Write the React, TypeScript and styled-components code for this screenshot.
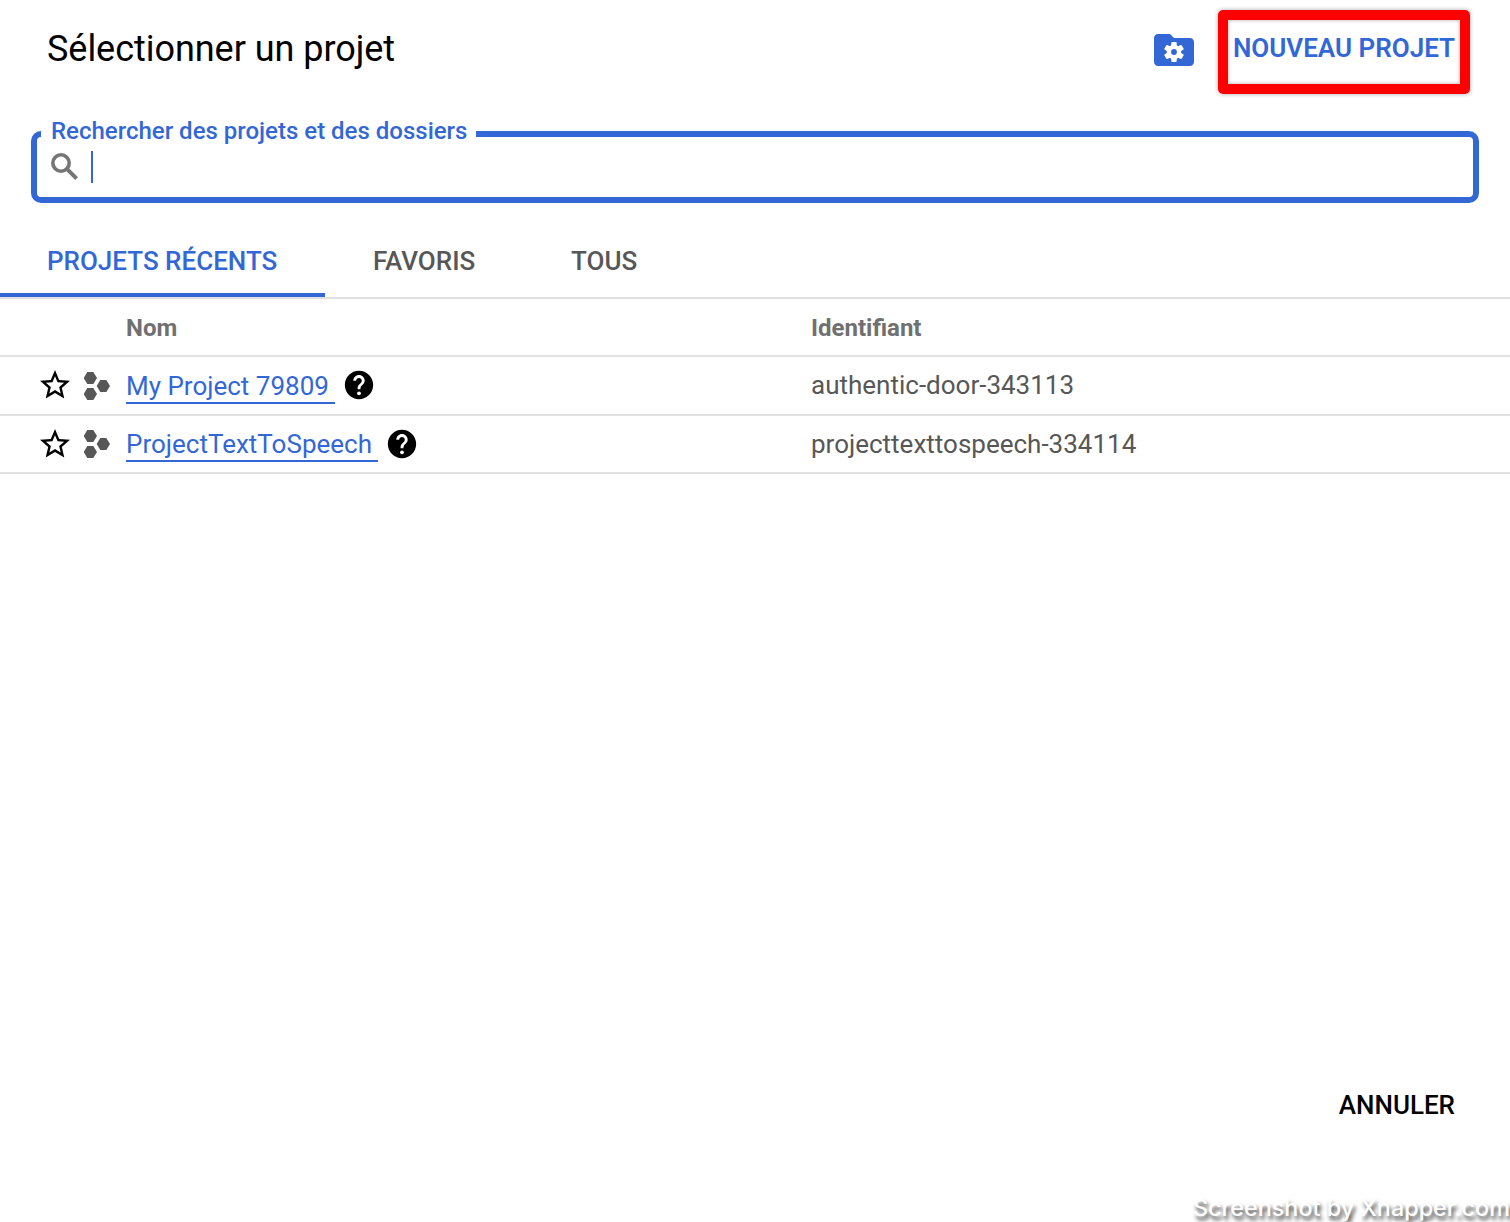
import React from "react";
import styled, { createGlobalStyle } from "styled-components";

const BLUE = "#3367d6";
const LINE = "#e0e0e0";

const GlobalStyle = createGlobalStyle`
  *, *::before, *::after { box-sizing: border-box; }
  body { margin: 0; background: #fff; font-family: Roboto, "Liberation Sans", sans-serif; }
  button { border: 0; background: none; padding: 0; font: inherit; }
`;

const Dialog = styled.main`
  position: relative;
  display: flex;
  flex-direction: column;
  width: 1510px;
  height: 1222px;
  overflow: hidden;
  background: #fff;
`;

const Header = styled.header`
  display: flex;
  align-items: flex-start;
  height: 120px;
  padding: 10px 40px 0 47px;
`;

const Title = styled.h1`
  flex: 1;
  margin: 18px 0 0;
  font-size: 36px;
  line-height: 42px;
  font-weight: 400;
  letter-spacing: -0.04px;
  color: #000;
`;

const FolderIcon = styled.svg`
  width: 48px;
  height: 48px;
  margin: 16px 20px 0 0;
  fill: ${BLUE};
`;

const NewProject = styled.button`
  width: 252px;
  height: 84px;
  padding-bottom: 8px;
  border: 10px solid #ff0000;
  border-radius: 5px;
  box-shadow: 0 0 4px rgba(0, 0, 0, 0.35), inset 0 0 4px rgba(0, 0, 0, 0.3);
  color: ${BLUE};
  font-size: 26px;
  line-height: 32px;
  font-weight: 600;
  white-space: nowrap;
`;

const SearchField = styled.fieldset`
  height: 83px;
  min-width: 0;
  margin: 0 31px;
  padding: 0 4px;
  border: 6px solid ${BLUE};
  border-radius: 10px;
`;

const SearchLabel = styled.legend`
  height: 28px;
  padding: 0 9px 6px 10px;
  color: ${BLUE};
  font-size: 24px;
  line-height: 22px;
  font-weight: 500;
  white-space: nowrap;
`;

const SearchRow = styled.div`
  display: flex;
  align-items: flex-start;
  padding-left: 10px;
`;

const SearchIcon = styled.svg`
  width: 28px;
  height: 28px;
  margin-top: 5px;
  fill: none;
  stroke: #757575;
`;

const Caret = styled.span`
  width: 2px;
  height: 32px;
  margin: 3px 0 0 12px;
  background: ${BLUE};
`;

const Tabs = styled.nav`
  display: flex;
  gap: 1px;
  height: 96px;
  padding-top: 28px;
  border-bottom: 2px solid ${LINE};
`;

const Tab = styled.button<{ $active?: boolean; $width: number }>`
  width: ${(p) => p.$width}px;
  padding: 0 0 2px 47px;
  border-bottom: 4px solid ${(p) => (p.$active ? BLUE : "transparent")};
  color: ${(p) => (p.$active ? BLUE : "#575757")};
  font-size: 26px;
  line-height: 32px;
  font-weight: 500;
  text-align: left;
  white-space: nowrap;
`;

const Row = styled.div<{ $first?: boolean }>`
  display: grid;
  grid-template-columns: 126px 685px 1fr;
  align-items: center;
  height: ${(p) => (p.$first ? 59 : 58)}px;
  padding-bottom: ${(p) => (p.$first ? 1 : 0)}px;
  border-bottom: 2px solid ${LINE};
  color: #575757;
  font-size: 26px;
  line-height: 32px;
`;

const HeadCell = styled.span`
  padding-top: 2px;
  color: #707070;
  font-size: 24px;
  font-weight: 700;
`;

const RowIcons = styled.span`
  display: flex;
  align-items: center;
  padding-left: 37px;
`;

const StarIcon = styled.svg`
  width: 36px;
  height: 36px;
  fill: #000;
`;

const HexIcon = styled.svg<{ $first?: boolean }>`
  width: 28px;
  height: 28px;
  margin: ${(p) => (p.$first ? 2 : 0)}px 0 0 10px;
  fill: #575757;
`;

const NameCell = styled.span`
  display: flex;
  align-items: center;
`;

const ProjectLink = styled.a<{ $width: number; $first?: boolean }>`
  width: ${(p) => p.$width}px;
  height: 34px;
  margin-top: ${(p) => (p.$first ? 4 : 2)}px;
  border-bottom: 2px solid ${BLUE};
  color: ${BLUE};
  white-space: nowrap;
`;

const HelpIcon = styled.svg`
  width: 34px;
  height: 34px;
  margin-left: 7px;
  fill: #000;
`;

const IdCell = styled.span`
  white-space: nowrap;
`;

const Footer = styled.footer`
  display: flex;
  justify-content: flex-end;
  margin-top: auto;
  padding: 0 55px 101px 0;
`;

const Cancel = styled.button`
  color: #000;
  font-size: 26px;
  line-height: 32px;
  font-weight: 500;
`;

const Watermark = styled.div`
  position: absolute;
  left: 1193px;
  bottom: 0;
  color: #fff;
  font-family: Inter, "Liberation Sans", sans-serif;
  font-size: 23.4px;
  line-height: 28px;
  font-weight: 500;
  white-space: nowrap;
  text-shadow: 2px 4px 4px rgba(0, 0, 0, 0.8);
`;

const projects = [
  { name: "My Project 79809", id: "authentic-door-343113", width: 209 },
  { name: "ProjectTextToSpeech", id: "projecttexttospeech-334114", width: 252 },
];

export default function App() {
  return (
    <>
      <GlobalStyle />
      <Dialog>
        <Header>
          <Title>Sélectionner un projet</Title>
          <FolderIcon viewBox="0 0 48 48">
            <path d="M40 12H24l-4-4H8c-2.2 0-4 1.8-4 4v24c0 2.2 1.8 4 4 4h32c2.2 0 4-1.8 4-4V16c0-2.2-1.8-4-4-4z" />
            <g fill="#fff" transform="translate(24 26)">
              <circle r="7.3" />
              <rect x="-2.7" y="-10" width="5.4" height="20" rx="0.9" />
              <rect x="-2.7" y="-10" width="5.4" height="20" rx="0.9" transform="rotate(60)" />
              <rect x="-2.7" y="-10" width="5.4" height="20" rx="0.9" transform="rotate(120)" />
            </g>
            <circle cx="24" cy="26" r="2.9" />
          </FolderIcon>
          <NewProject>NOUVEAU PROJET</NewProject>
        </Header>
        <SearchField>
          <SearchLabel>Rechercher des projets et des dossiers</SearchLabel>
          <SearchRow>
            <SearchIcon viewBox="0 0 28 28">
              <circle cx="10" cy="10" r="8.2" strokeWidth="3.6" />
              <path d="M15.6 15.6L25.6 25.6" strokeWidth="4" />
            </SearchIcon>
            <Caret />
          </SearchRow>
        </SearchField>
        <Tabs>
          <Tab $active $width={325}>PROJETS RÉCENTS</Tab>
          <Tab $width={197}>FAVORIS</Tab>
          <Tab $width={162}>TOUS</Tab>
        </Tabs>
        <Row>
          <span />
          <HeadCell>Nom</HeadCell>
          <HeadCell>Identifiant</HeadCell>
        </Row>
        {projects.map((p, i) => (
          <Row key={p.id} $first={i === 0}>
            <RowIcons>
              <StarIcon viewBox="0 0 24 24">
                <path d="M22 9.24l-7.19-.62L12 2 9.19 8.63 2 9.24l5.46 4.73L5.82 21 12 17.27 18.18 21l-1.63-7.03L22 9.24zM12 15.4l-3.76 2.27 1-4.28-3.32-2.88 4.38-.38L12 6.1l1.71 4.04 4.38.38-3.32 2.88 1 4.28L12 15.4z" />
              </StarIcon>
              <HexIcon $first={i === 0} viewBox="0 0 28 28">
                <path d="M4.3 0h6L14 6l-3.7 6h-6L.7 6zM4.3 16h6l3.7 6-3.7 6h-6L.7 22zM17.3 8h6l3.7 6-3.7 6h-6l-3.6-6z" />
              </HexIcon>
            </RowIcons>
            <NameCell>
              <ProjectLink $first={i === 0} $width={p.width}>{p.name}</ProjectLink>
              <HelpIcon viewBox="0 0 24 24">
                <path d="M12 2C6.48 2 2 6.48 2 12s4.48 10 10 10 10-4.48 10-10S17.52 2 12 2zm1 17h-2v-2h2v2zm2.07-7.75l-.9.92C13.45 12.9 13 13.5 13 15h-2v-.5c0-1.1.45-2.1 1.17-2.83l1.24-1.26c.37-.36.59-.86.59-1.41 0-1.1-.9-2-2-2s-2 .9-2 2H8c0-2.21 1.79-4 4-4s4 1.79 4 4c0 .88-.36 1.68-.93 2.25z" />
                <circle cx="12" cy="18" r="1.7" fill="#000" />
                <circle cx="12" cy="17.9" r="1.35" fill="#fff" />
              </HelpIcon>
            </NameCell>
            <IdCell>{p.id}</IdCell>
          </Row>
        ))}
        <Footer>
          <Cancel>ANNULER</Cancel>
        </Footer>
        <Watermark>Screenshot by Xnapper.com</Watermark>
      </Dialog>
    </>
  );
}
